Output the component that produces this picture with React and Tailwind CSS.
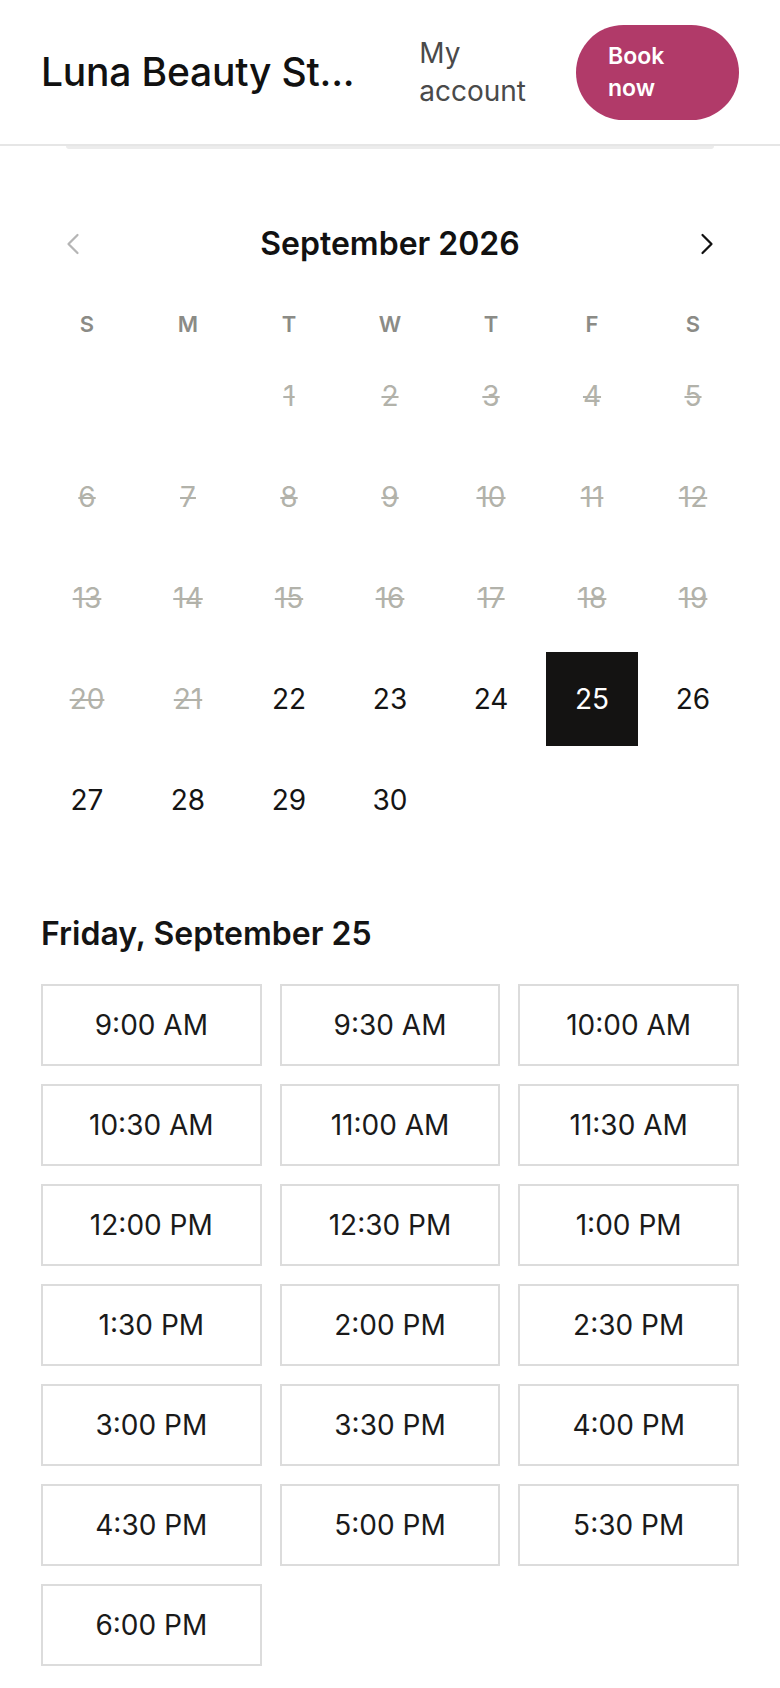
import React from "react";

const Chevron = ({ dir, className }) => (
  <svg width="36" height="36" viewBox="0 0 24 24" fill="none" stroke="currentColor" strokeWidth="1.5" strokeLinecap="round" strokeLinejoin="round" className={className}>
    {dir === "left" ? <path d="m15 18-6-6 6-6" /> : <path d="m9 18 6-6-6-6" />}
  </svg>
);

const weekdays = ["S", "M", "T", "W", "T", "F", "S"];
const slots = [
  "9:00 AM", "9:30 AM", "10:00 AM",
  "10:30 AM", "11:00 AM", "11:30 AM",
  "12:00 PM", "12:30 PM", "1:00 PM",
  "1:30 PM", "2:00 PM", "2:30 PM",
  "3:00 PM", "3:30 PM", "4:00 PM",
  "4:30 PM", "5:00 PM", "5:30 PM",
  "6:00 PM",
];

export default function App() {
  const cells = [null, null];
  for (let d = 1; d <= 30; d++) cells.push(d);

  return (
    <div className="w-[780px] min-h-[1688px] bg-white text-[#141414]" style={{ fontFamily: "Inter, 'Noto Sans', sans-serif" }}>
      <header className="h-[146px] border-b-2 border-[#e6e6e6] flex items-center pl-[41px] pr-[41px]">
        <div className="flex-1 min-w-0 text-[39px] font-medium tracking-[-0.2px] text-[#111] whitespace-nowrap">
          Luna Beauty St...
        </div>
        <div className="text-[28px] leading-[38px] text-[#4a4a4a] mr-[50px] ml-[20px]">
          <span className="block">My</span>
          <span className="block">account</span>
        </div>
        <div className="w-[163px] h-[95px] rounded-full bg-[#b13a69] text-white flex flex-col justify-center pl-[32px] text-[23px] leading-[32px] font-semibold">
          <span className="block">Book</span>
          <span className="block">now</span>
        </div>
      </header>
      <div className="mx-[66px] h-[3px] bg-[#ececec] rounded-b-sm" />

      <section className="px-[41px] pt-[71px]">
        <div className="h-[48px] flex items-center justify-between">
          <Chevron dir="left" className="text-[#b5b5b5] ml-[14px]" />
          <div className="text-[32px] font-semibold text-[#111]">September 2026</div>
          <Chevron dir="right" className="text-[#111] mr-[14px]" />
        </div>

        <div className="grid grid-cols-7 gap-x-[9px] mt-[36px] h-[40px]">
          {weekdays.map((w, i) => (
            <div key={i} className="flex items-center justify-center text-[22px] font-semibold text-[#8b8b86]">
              {w}
            </div>
          ))}
        </div>

        <div className="grid grid-cols-7 gap-x-[9px] gap-y-[7px] mt-[5px]">
          {cells.map((d, i) => {
            if (d === null) return <div key={i} className="h-[94px]" />;
            const disabled = d < 22;
            const selected = d === 25;
            return (
              <div
                key={i}
                className={
                  "h-[94px] flex items-center justify-center text-[28px] " +
                  (selected
                    ? "bg-[#141312] text-white"
                    : disabled
                    ? "text-[#b2b2aa] line-through decoration-2"
                    : "text-[#141414]")
                }
              >
                {d}
              </div>
            );
          })}
        </div>

        <h2 className="mt-[67px] text-[32px] leading-[40px] font-semibold text-[#141414]">
          Friday, September 25
        </h2>

        <div className="grid grid-cols-3 gap-[18px] mt-[30px] pb-[23px]">
          {slots.map((s) => (
            <div key={s} className="h-[82px] border-2 border-[#dcdcdc] flex items-center justify-center text-[28px] text-[#1a1a1a]">
              {s}
            </div>
          ))}
        </div>
      </section>
    </div>
  );
}
